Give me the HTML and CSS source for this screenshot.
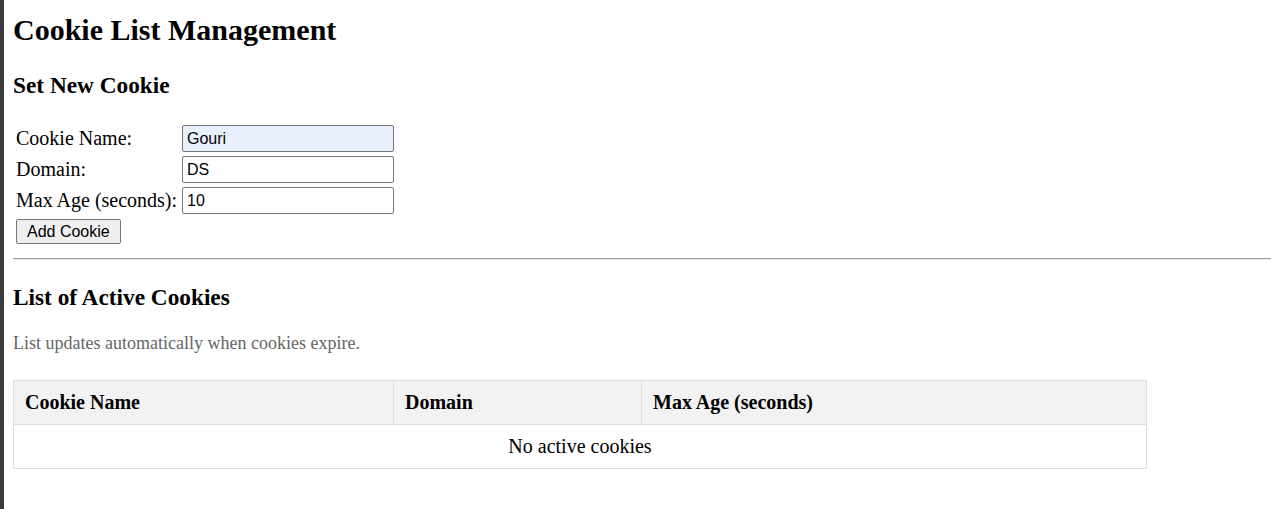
FILE: index.html
```html
<!DOCTYPE html>
<html lang="en">
<head>
<meta charset="utf-8">
<title>Cookie List Management</title>
<link rel="stylesheet" href="styles.css">
</head>
<body>
<h1 class="title">Cookie List Management</h1>

<h2 class="section-title">Set New Cookie</h2>
<form class="cookie-form">
  <label class="field-label" for="cname">Cookie Name:</label>
  <input class="field-input autofilled" id="cname" type="text" value="Gouri">
  <label class="field-label" for="cdomain">Domain:</label>
  <input class="field-input" id="cdomain" type="text" value="DS">
  <label class="field-label" for="cage">Max Age (seconds):</label>
  <input class="field-input" id="cage" type="text" value="10">
  <button class="add-btn" type="button">Add Cookie</button>
</form>

<hr class="divider">

<h2 class="section-title list-title">List of Active Cookies</h2>
<p class="hint">List updates automatically when cookies expire.</p>

<table class="cookie-table">
  <colgroup>
    <col class="col-name">
    <col class="col-domain">
    <col class="col-age">
  </colgroup>
  <thead>
    <tr>
      <th>Cookie Name</th>
      <th>Domain</th>
      <th>Max Age (seconds)</th>
    </tr>
  </thead>
  <tbody>
    <tr>
      <td class="empty" colspan="3">No active cookies</td>
    </tr>
  </tbody>
</table>
</body>
</html>
```
FILE: styles.css
```css
html {
  background: #ffffff;
}

body {
  margin: 0;
  padding: 0 0 0 9px;
  border-left: 4px solid #3c3c3c;
  min-height: 100vh;
  box-sizing: border-box;
  font-family: "Liberation Serif", "Times New Roman", serif;
  color: #000;
  overflow: hidden;
}

.title {
  margin: 12px 0 0;
  font-size: 30px;
  line-height: 36px;
  font-weight: bold;
}

.section-title {
  margin: 23px 0 0;
  font-size: 23.3px;
  line-height: 28px;
  font-weight: bold;
}

.cookie-form {
  margin: 26px 0 0 3px;
  display: grid;
  grid-template-columns: 166px 212px;
  grid-auto-rows: 27px;
  row-gap: 4px;
  width: max-content;
}

.field-label {
  font-size: 20px;
  line-height: 27px;
  white-space: nowrap;
}

.field-input {
  box-sizing: border-box;
  width: 212px;
  height: 27px;
  margin: 0;
  padding: 0 4px;
  border: 1px solid #767676;
  border-radius: 2px;
  background: #fff;
  font-family: "Liberation Sans", Arial, sans-serif;
  font-size: 16px;
  color: #000;
}

.field-input.autofilled {
  background: #e8f0fe;
}

.add-btn {
  grid-column: 1 / span 2;
  justify-self: start;
  margin-top: 1px;
  box-sizing: border-box;
  height: 25px;
  padding: 0 10px;
  border: 1px solid #767676;
  border-radius: 2px;
  background: #efefef;
  font-family: "Liberation Sans", Arial, sans-serif;
  font-size: 16px;
  color: #000;
}

.divider {
  margin: 13px 0 0;
  height: 0;
  border: 0;
  border-top: 1px solid #9a9a9a;
  border-bottom: 1px solid #eeeeee;
}

.list-title {
  margin-top: 23px;
}

.hint {
  margin: 22px 0 0;
  font-size: 18px;
  line-height: 21px;
  color: #666666;
}

.cookie-table {
  margin-top: 26px;
  border-collapse: collapse;
  table-layout: fixed;
  width: 1133px;
  border: 1px solid #dddddd;
}

.col-name { width: 380px; }
.col-domain { width: 248px; }
.col-age { width: 505px; }

.cookie-table th,
.cookie-table td {
  border: 1px solid #dddddd;
  padding: 10px 11px;
  line-height: 23px;
}

.cookie-table th {
  background: #f2f2f2;
  text-align: left;
  font-size: 20px;
  font-weight: bold;
}

.cookie-table td.empty {
  text-align: center;
  font-size: 20px;
}
```
